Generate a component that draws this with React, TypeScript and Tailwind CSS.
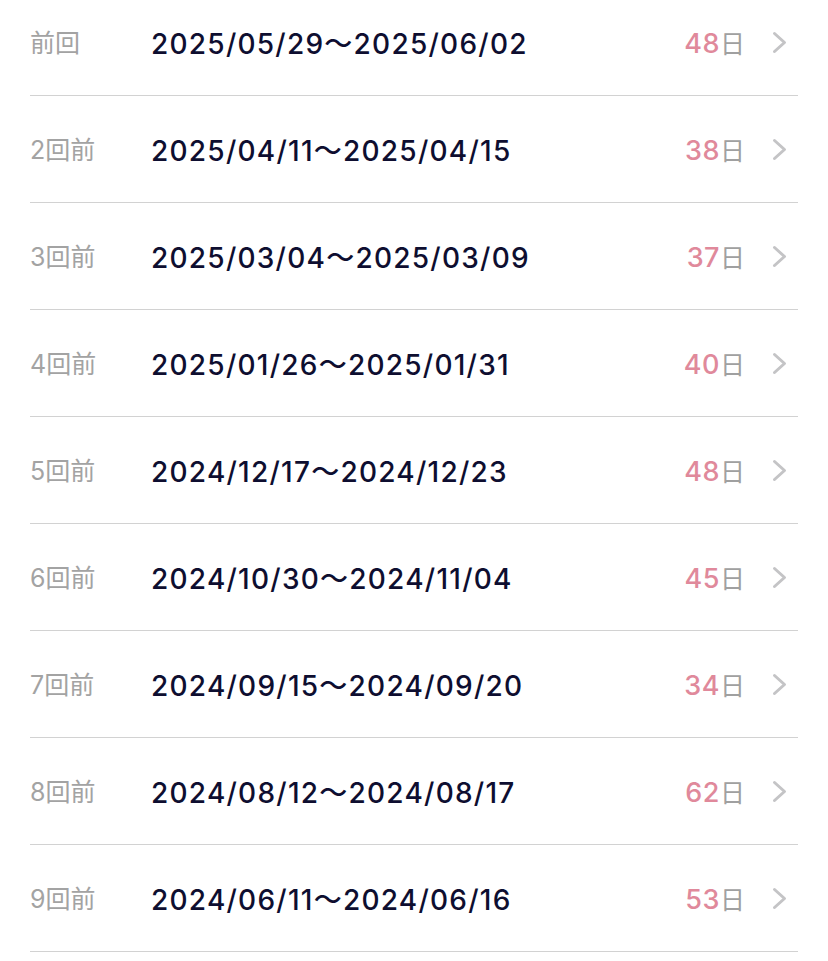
const rows = [
  { label: "前回", range: "2025/05/29～2025/06/02", days: 48 },
  { label: "2回前", range: "2025/04/11～2025/04/15", days: 38 },
  { label: "3回前", range: "2025/03/04～2025/03/09", days: 37 },
  { label: "4回前", range: "2025/01/26～2025/01/31", days: 40 },
  { label: "5回前", range: "2024/12/17～2024/12/23", days: 48 },
  { label: "6回前", range: "2024/10/30～2024/11/04", days: 45 },
  { label: "7回前", range: "2024/09/15～2024/09/20", days: 34 },
  { label: "8回前", range: "2024/08/12～2024/08/17", days: 62 },
  { label: "9回前", range: "2024/06/11～2024/06/16", days: 53 },
];

const Chevron = () => (
  <svg
    width="15"
    height="23"
    viewBox="0 0 15 23"
    fill="none"
    stroke="currentColor"
    strokeWidth="3"
    strokeLinecap="round"
    strokeLinejoin="round"
    className="ml-[27px] mr-[11px] -mt-[4px] text-[#c4c4c6]"
  >
    <polyline points="2.5,2.5 12.5,11.5 2.5,20.5" />
  </svg>
);

const App = () => {
  return (
    <div className="h-[961px] overflow-hidden bg-white font-['Inter','Noto_Sans_CJK_JP',sans-serif]">
      <ul className="-mt-[11px] px-[30px]">
        {rows.map((row) => (
          <li
            key={row.label}
            className="flex h-[107px] items-center border-b border-[#d2d2d2] pt-[4px]"
          >
            <span className="w-[121px] text-[25px] text-[#a3a3a3]">{row.label}</span>
            <span className="flex-1 text-[28px] font-medium tracking-[1.25px] text-[#0e0e30]">
              {row.range}
            </span>
            <span className="flex items-baseline">
              <span className="text-[27px] font-medium tracking-[0.5px] text-[#e0899b]">
                {row.days}
              </span>
              <span className="text-[25px] text-[#a0a0a0]">日</span>
            </span>
            <Chevron />
          </li>
        ))}
      </ul>
    </div>
  );
};

export default App;
